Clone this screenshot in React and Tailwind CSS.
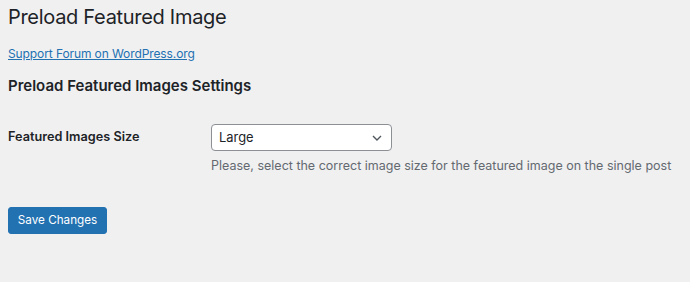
import React from "react";

export default function App() {
  return (
    <div className="w-[690px] h-[282px] bg-[#f0f0f1] text-[#1d2327] px-2 overflow-hidden" style={{ fontFamily: "Inter, 'Noto Sans', sans-serif" }}>
      <h1 className="text-[20px] leading-[24px] font-normal pt-[5px] tracking-[-0.3px]">Preload Featured Image</h1>
      <div className="mt-[17px] text-[12px] leading-[16px] tracking-[-0.1px]">
        <a href="#" className="text-[#2271b1] underline">Support Forum on WordPress.org</a>
      </div>
      <h2 className="text-[15px] leading-[20px] font-semibold mt-[14px]">Preload Featured Images Settings</h2>
      <div className="flex mt-[28px]">
        <div className="w-[203px] text-[12.7px] font-semibold leading-[18px] pt-[4px]">Featured Images Size</div>
        <div className="flex flex-col">
          <div className="w-[181px] h-[27px] bg-white border border-[#8c8f94] rounded-[4px] flex items-center justify-between pl-[7px] pr-[9px]">
            <span className="text-[12.9px]">Large</span>
            <svg width="10" height="6" viewBox="0 0 10 6" fill="none" stroke="#50575e" strokeWidth="1.4">
              <path d="M1 1 L5 5 L9 1" />
            </svg>
          </div>
          <p className="text-[12.5px] text-[#646970] mt-[6px] leading-[17px] whitespace-nowrap">Please, select the correct image size for the featured image on the single post</p>
        </div>
      </div>
      <button className="mt-[33px] h-[27px] w-[99px] bg-[#2271b1] text-white text-[11.7px] rounded-[3px] border border-[#2271b1] flex items-center justify-center">Save Changes</button>
    </div>
  );
}
